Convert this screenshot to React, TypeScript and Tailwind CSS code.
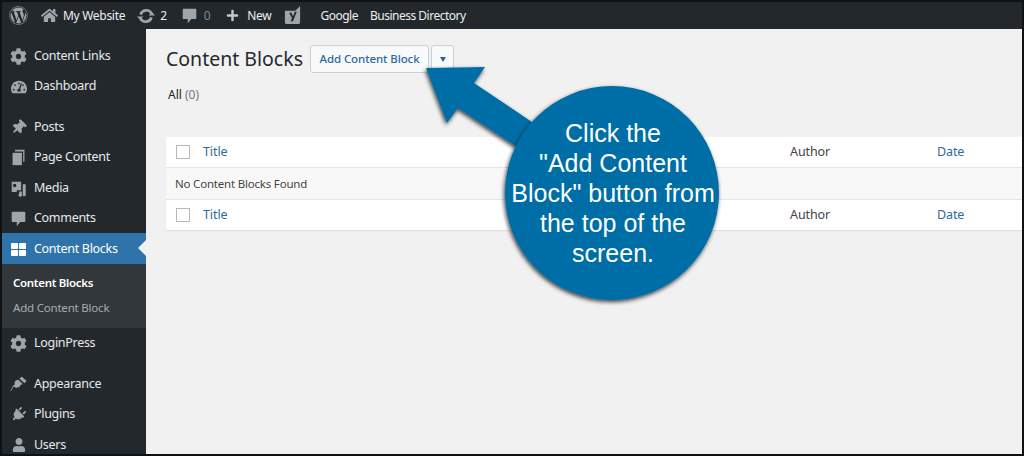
import { FaWordpress, FaHome, FaPlus, FaCog, FaTachometerAlt, FaThumbtack, FaThLarge, FaPlug, FaUser } from "react-icons/fa";
import type { ReactNode } from "react";

const font = "font-['Noto_Sans','Open_Sans',sans-serif]";

const Bubble = ({ className }: { className?: string }) => (
  <svg viewBox="0 0 20 20" className={className} fill="currentColor">
    <path d="M3 2h14a1 1 0 0 1 1 1v10a1 1 0 0 1-1 1h-5l-4 5v-5H3a1 1 0 0 1-1-1V3a1 1 0 0 1 1-1z" />
  </svg>
);

const Refresh = ({ className }: { className?: string }) => (
  <svg viewBox="0 0 20 20" className={className} fill="none" stroke="currentColor" strokeWidth="3">
    <path d="M4 8.500a6.500 6.500 0 0 1 12-1.500M16 11.500a6.500 6.500 0 0 1-12 1.500" />
    <path d="M20 9.500h-7l3.500-4zM0 10.500h7l-3.500 4z" fill="currentColor" stroke="none" />
  </svg>
);

const MediaIcon = ({ className }: { className?: string }) => (
  <svg viewBox="0 0 20 20" className={className} fill="currentColor">
    <path fillRule="evenodd" d="M2 2h11v10H8v2H2zm3.500 2.500a2 2 0 1 0 .01 4 2 2 0 0 0-.01-4z" />
    <path d="M15 5h3.500v12.500a2 2 0 0 1-3.500 1zM11 13.500h3v4a2 2 0 1 1-3-1.500z" />
  </svg>
);

const PagesIcon = ({ className }: { className?: string }) => (
  <svg viewBox="0 0 20 20" className={className} fill="currentColor">
    <path d="M6 1h11v14h-1.500V3H6z" />
    <path d="M3 4.500h11V19H3z" />
  </svg>
);

const BrushIcon = ({ className }: { className?: string }) => (
  <svg viewBox="0 0 20 20" className={className} fill="currentColor">
    <path d="M11 3l6 5.500 2.500-2.500L14 1z" />
    <path d="M10 4.500l5 5-3 1.500-1 2.500-2-.5-1.500 1.500-3-2.500L1 18l-.500-.500 3-6 2.500-2L5 8l2-3z" />
  </svg>
);

const YoastIcon = ({ className }: { className?: string }) => (
  <svg viewBox="0 0 20 20" className={className}>
    <path d="M2 5h11l5-5v17a2 2 0 0 1-2 2H4a2 2 0 0 1-2-2z" fill="currentColor" />
    <path d="M6.500 7l3 6-1.500 3h2.500l4-10-2 0-2 5-1.500-4z" fill="#23282d" />
  </svg>
);

const BarItem = ({ children, className = "" }: { children: ReactNode; className?: string }) => (
  <span className={`flex items-center text-[12px] tracking-[-0.3px] text-[#eeeeee] ${className}`}>{children}</span>
);

const AdminBar = () => (
  <div className="flex h-[27px] shrink-0 items-center bg-[#23282d] pl-[7px]">
    <FaWordpress className="size-[19px] text-[#a0a5aa]" />
    <FaHome className="ml-[13px] size-[17px] text-[#a0a5aa]" />
    <BarItem className="ml-[5px]">My Website</BarItem>
    <Refresh className="ml-[12px] size-[18px] text-[#a0a5aa]" />
    <BarItem className="ml-[5px]">2</BarItem>
    <Bubble className="ml-[14px] size-[17px] text-[#a0a5aa]" />
    <BarItem className="ml-[6px] text-[#82878c]!">0</BarItem>
    <FaPlus className="ml-[16px] size-[13px] text-[#c4c6c8]" />
    <BarItem className="ml-[8px]">New</BarItem>
    <YoastIcon className="ml-[12px] size-[19px] text-[#a0a5aa]" />
    <BarItem className="ml-[18px] tracking-[-0.5px]!">Google</BarItem>
    <BarItem className="ml-[12px] tracking-[-0.5px]!">Business Directory</BarItem>
  </div>
);

const MenuRow = ({ icon, label, active = false }: { icon: ReactNode; label: string; active?: boolean }) => (
  <div className={`relative flex h-[30.5px] shrink-0 items-center pt-[2px] ${active ? "bg-[#2f73ab] text-white" : "text-[#e8e9ea]"}`}>
    <span className={`flex w-[32px] shrink-0 justify-center pl-[1px] ${active ? "text-white" : "text-[#a0a5aa]"}`}>{icon}</span>
    <span className="text-[12.500px] tracking-[-0.3px]">{label}</span>
    {active && <span className="absolute right-0 top-1/2 -translate-y-1/2 border-y-[8px] border-r-[8px] border-y-transparent border-r-[#f1f1f1]" />}
  </div>
);

const Sidebar = () => (
  <div className="flex w-[144px] shrink-0 flex-col overflow-hidden bg-[#23282d] pt-[11px]">
    <MenuRow icon={<FaCog className="size-[17px]" />} label="Content Links" />
    <MenuRow icon={<FaTachometerAlt className="size-[16px]" />} label="Dashboard" />
    <div className="h-[10px] shrink-0" />
    <MenuRow icon={<FaThumbtack className="size-[15px] rotate-45" />} label="Posts" />
    <MenuRow icon={<PagesIcon className="size-[17px]" />} label="Page Content" />
    <MenuRow icon={<MediaIcon className="size-[17px]" />} label="Media" />
    <MenuRow icon={<Bubble className="size-[17px]" />} label="Comments" />
    <MenuRow icon={<FaThLarge className="size-[15px]" />} label="Content Blocks" active />
    <div className="flex h-[64px] shrink-0 flex-col bg-[#32373c] pl-[11px] pt-[7px] text-[11.500px]">
      <div className="flex h-[25px] items-center font-semibold tracking-[-0.3px] text-white">Content Blocks</div>
      <div className="flex h-[25px] items-center tracking-[-0.2px] text-[#a9acaf]">Add Content Block</div>
    </div>
    <MenuRow icon={<FaCog className="size-[17px]" />} label="LoginPress" />
    <div className="h-[10px] shrink-0" />
    <MenuRow icon={<BrushIcon className="size-[17px]" />} label="Appearance" />
    <MenuRow icon={<FaPlug className="size-[15px] rotate-45" />} label="Plugins" />
    <MenuRow icon={<FaUser className="size-[14px]" />} label="Users" />
  </div>
);

const TableRow = () => (
  <div className="flex h-[30px] items-center bg-white text-[12.500px] tracking-[-0.1px]">
    <span className="ml-[10px] size-[14px] border border-[#b4b9be] bg-white" />
    <span className="ml-[13px] flex-1 text-[#2f6a9f]">Title</span>
    <span className="w-[147px] text-[#444]">Author</span>
    <span className="w-[85px] text-[#2f6a9f]">Date</span>
  </div>
);

const Callout = () => (
  <div className="absolute left-[418px] top-[58px] h-[250px] w-[310px]">
    <svg viewBox="0 0 310 250" className="absolute inset-0 size-full overflow-visible">
      <defs>
        <filter id="sh" x="-20%" y="-20%" width="140%" height="140%">
          <feDropShadow dx="-1" dy="2" stdDeviation="2" floodColor="#000" floodOpacity="0.75" />
        </filter>
      </defs>
      <path d="M6 8 L65 7 L54 23 L112 62 L97 87 L38 48 L27 63 Z" fill="#026ea6" filter="url(#sh)" />
      <circle cx="192" cy="133" r="107" fill="#026ea6" filter="url(#sh)" />
    </svg>
    <div className="absolute left-[86px] top-[58px] flex w-[214px] flex-col items-center font-['Liberation_Sans',sans-serif] text-[25px] leading-[30px] text-white">
      <span>Click the</span>
      <span>"Add Content</span>
      <span>Block" button from</span>
      <span>the top of the</span>
      <span>screen.</span>
    </div>
  </div>
);

export default function App() {
  return (
    <div className={`relative flex h-[456px] w-[1024px] flex-col overflow-hidden border-2 border-[#111] ${font}`}>
      <AdminBar />
      <div className="flex min-h-0 flex-1">
        <Sidebar />
        <main className="min-w-0 flex-1 bg-[#f1f1f1] pl-[20px] pt-[16px]">
          <div className="flex items-center">
            <h1 className="text-[19.500px] leading-[28px] text-[#23282d]">Content Blocks</h1>
            <button className="ml-[7px] flex h-[28px] w-[119px] items-center justify-center rounded-[3px] border border-[#ccd0d4] bg-[#f8f9fa] text-[11.500px] font-medium tracking-[-0.1px] text-[#2f6a9f]">Add Content Block</button>
            <button className="ml-[2px] flex h-[28px] w-[23px] items-center justify-center rounded-[3px] border border-[#ccd0d4] bg-[#f8f9fa]">
              <span className="border-x-[3.500px] border-t-[5px] border-x-transparent border-t-[#2f5f93]" />
            </button>
          </div>
          <div className="ml-[2px] mt-[8px] text-[12px] leading-[28px] text-[#222]">All <span className="text-[#72777c]">(0)</span></div>
          <div className="mt-[28px] flex flex-col gap-px bg-[#e3e5e7] shadow-[0_1px_1px_rgba(0,0,0,0.08)]">
            <TableRow />
            <div className="flex h-[31px] items-center bg-[#f8f8f8] pl-[9px] text-[11.500px] tracking-[-0.2px] text-[#444]">No Content Blocks Found</div>
            <TableRow />
          </div>
        </main>
      </div>
      <Callout />
    </div>
  );
}
